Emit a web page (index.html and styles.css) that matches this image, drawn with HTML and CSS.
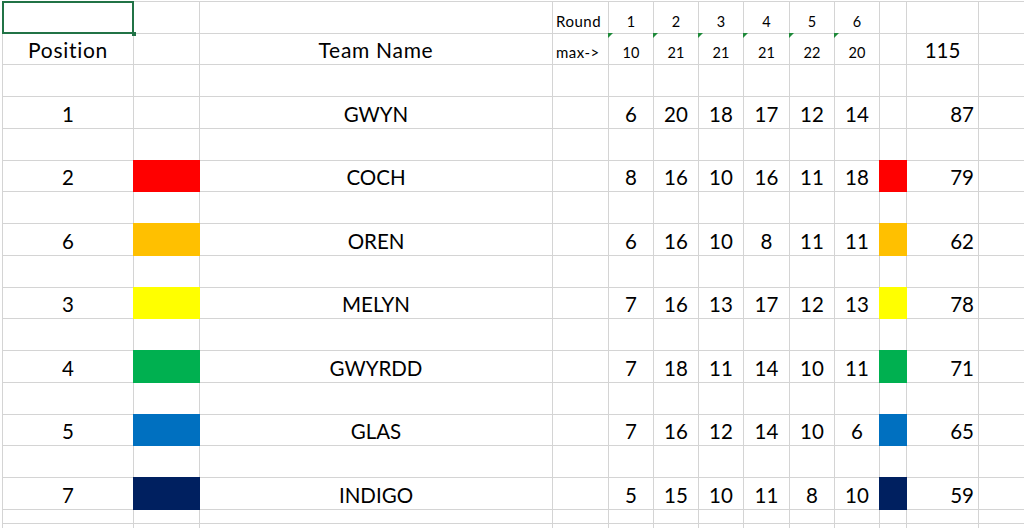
FILE: index.html
```html
<!DOCTYPE html>
<html>
<head>
<meta charset="utf-8">
<link rel="stylesheet" href="styles.css">
</head>
<body>
<div class="sheet">
  <div class="row">
    <div class="c sel"></div><div class="c"></div><div class="c"></div>
    <div class="c sm l txt">Round</div>
    <div class="c sm">1</div><div class="c sm">2</div><div class="c sm">3</div><div class="c sm">4</div><div class="c sm">5</div><div class="c sm">6</div>
    <div class="c"></div><div class="c"></div><div class="c"></div>
  </div>
  <div class="row">
    <div class="c lg hd">Position</div><div class="c"></div><div class="c lg hd">Team Name</div>
    <div class="c sm l txt">max-&gt;</div>
    <div class="c sm tri">10</div><div class="c sm tri">21</div><div class="c sm tri">21</div><div class="c sm tri">21</div><div class="c sm tri">22</div><div class="c sm tri">20</div>
    <div class="c"></div><div class="c lg">115</div><div class="c"></div>
  </div>
  <div class="row blank">
    <div class="c"></div><div class="c"></div><div class="c"></div><div class="c"></div><div class="c"></div><div class="c"></div><div class="c"></div><div class="c"></div><div class="c"></div><div class="c"></div><div class="c"></div><div class="c"></div><div class="c"></div>
  </div>
  <div class="row">
    <div class="c lg">1</div><div class="c"></div><div class="c lg">GWYN</div><div class="c"></div>
    <div class="c lg">6</div><div class="c lg">20</div><div class="c lg">18</div><div class="c lg">17</div><div class="c lg">12</div><div class="c lg">14</div>
    <div class="c"></div><div class="c lg r">87</div><div class="c"></div>
  </div>
  <div class="row blank">
    <div class="c"></div><div class="c"></div><div class="c"></div><div class="c"></div><div class="c"></div><div class="c"></div><div class="c"></div><div class="c"></div><div class="c"></div><div class="c"></div><div class="c"></div><div class="c"></div><div class="c"></div>
  </div>
  <div class="row">
    <div class="c lg">2</div><div class="c fill red"></div><div class="c lg">COCH</div><div class="c"></div>
    <div class="c lg">8</div><div class="c lg">16</div><div class="c lg">10</div><div class="c lg">16</div><div class="c lg">11</div><div class="c lg">18</div>
    <div class="c fill red"></div><div class="c lg r">79</div><div class="c"></div>
  </div>
  <div class="row blank">
    <div class="c"></div><div class="c"></div><div class="c"></div><div class="c"></div><div class="c"></div><div class="c"></div><div class="c"></div><div class="c"></div><div class="c"></div><div class="c"></div><div class="c"></div><div class="c"></div><div class="c"></div>
  </div>
  <div class="row">
    <div class="c lg">6</div><div class="c fill orange"></div><div class="c lg">OREN</div><div class="c"></div>
    <div class="c lg">6</div><div class="c lg">16</div><div class="c lg">10</div><div class="c lg">8</div><div class="c lg">11</div><div class="c lg">11</div>
    <div class="c fill orange"></div><div class="c lg r">62</div><div class="c"></div>
  </div>
  <div class="row blank">
    <div class="c"></div><div class="c"></div><div class="c"></div><div class="c"></div><div class="c"></div><div class="c"></div><div class="c"></div><div class="c"></div><div class="c"></div><div class="c"></div><div class="c"></div><div class="c"></div><div class="c"></div>
  </div>
  <div class="row">
    <div class="c lg">3</div><div class="c fill yellow"></div><div class="c lg">MELYN</div><div class="c"></div>
    <div class="c lg">7</div><div class="c lg">16</div><div class="c lg">13</div><div class="c lg">17</div><div class="c lg">12</div><div class="c lg">13</div>
    <div class="c fill yellow"></div><div class="c lg r">78</div><div class="c"></div>
  </div>
  <div class="row blank">
    <div class="c"></div><div class="c"></div><div class="c"></div><div class="c"></div><div class="c"></div><div class="c"></div><div class="c"></div><div class="c"></div><div class="c"></div><div class="c"></div><div class="c"></div><div class="c"></div><div class="c"></div>
  </div>
  <div class="row">
    <div class="c lg">4</div><div class="c fill green"></div><div class="c lg">GWYRDD</div><div class="c"></div>
    <div class="c lg">7</div><div class="c lg">18</div><div class="c lg">11</div><div class="c lg">14</div><div class="c lg">10</div><div class="c lg">11</div>
    <div class="c fill green"></div><div class="c lg r">71</div><div class="c"></div>
  </div>
  <div class="row blank">
    <div class="c"></div><div class="c"></div><div class="c"></div><div class="c"></div><div class="c"></div><div class="c"></div><div class="c"></div><div class="c"></div><div class="c"></div><div class="c"></div><div class="c"></div><div class="c"></div><div class="c"></div>
  </div>
  <div class="row">
    <div class="c lg">5</div><div class="c fill blue"></div><div class="c lg">GLAS</div><div class="c"></div>
    <div class="c lg">7</div><div class="c lg">16</div><div class="c lg">12</div><div class="c lg">14</div><div class="c lg">10</div><div class="c lg">6</div>
    <div class="c fill blue"></div><div class="c lg r">65</div><div class="c"></div>
  </div>
  <div class="row blank">
    <div class="c"></div><div class="c"></div><div class="c"></div><div class="c"></div><div class="c"></div><div class="c"></div><div class="c"></div><div class="c"></div><div class="c"></div><div class="c"></div><div class="c"></div><div class="c"></div><div class="c"></div>
  </div>
  <div class="row">
    <div class="c lg">7</div><div class="c fill navy"></div><div class="c lg">INDIGO</div><div class="c"></div>
    <div class="c lg">5</div><div class="c lg">15</div><div class="c lg">10</div><div class="c lg">11</div><div class="c lg">8</div><div class="c lg">10</div>
    <div class="c fill navy"></div><div class="c lg r">59</div><div class="c"></div>
  </div>
  <div class="row blank">
    <div class="c"></div><div class="c"></div><div class="c"></div><div class="c"></div><div class="c"></div><div class="c"></div><div class="c"></div><div class="c"></div><div class="c"></div><div class="c"></div><div class="c"></div><div class="c"></div><div class="c"></div>
  </div>
  <div class="row blank">
    <div class="c"></div><div class="c"></div><div class="c"></div><div class="c"></div><div class="c"></div><div class="c"></div><div class="c"></div><div class="c"></div><div class="c"></div><div class="c"></div><div class="c"></div><div class="c"></div><div class="c"></div>
  </div>
</div>
</body>
</html>
```

FILE: styles.css
```css
html, body {
  margin: 0;
  padding: 0;
  background: #ffffff;
  overflow: hidden;
}

body {
  width: 1024px;
  height: 528px;
  font-family: Lato, "Open Sans", sans-serif;
  color: #000000;
}

.sheet {
  display: grid;
  grid-template-columns: 130px 65px 352px 55px 44px 44px 44px 45px 44px 44px 26px 71px 60px;
  grid-template-rows: 31px 30px 31px 31px 31px 30px 31px 31px 31px 30px 31px 31px 31px 30px 31px 31px 13px 20px;
  gap: 1px;
  padding: 1px 0 0 1px;
  margin: 1px 0 0 2px;
  background: #d4d4d4;
  width: max-content;
}

.row {
  display: contents;
}

.c {
  background: #ffffff;
  display: flex;
  align-items: flex-end;
  justify-content: center;
  position: relative;
  line-height: 1;
  white-space: nowrap;
}

.lg {
  font-size: 20.5px;
  padding-bottom: 4px;
}

.hd {
  font-size: 21px;
  letter-spacing: 0.7px;
}

.sm {
  font-size: 14.5px;
  padding-bottom: 4px;
}

.txt {
  font-size: 15px;
  letter-spacing: 0.5px;
}

.l {
  justify-content: flex-start;
  padding-left: 3px;
}

.r {
  justify-content: flex-end;
  padding-right: 4px;
}

.sel {
  z-index: 1;
  box-shadow: 0 0 0 1px #217346, inset 0 0 0 1px #217346;
}

.sel::after {
  content: "";
  position: absolute;
  right: -3px;
  bottom: -3px;
  width: 4px;
  height: 4px;
  background: #217346;
}

.tri::before {
  content: "";
  position: absolute;
  left: -1px;
  top: -1px;
  width: 0;
  height: 0;
  border-style: solid;
  border-width: 5px 5px 0 0;
  border-color: #1f8a3a transparent transparent transparent;
}

.fill {
  margin: -1px;
}

.red { background: #ff0000; }
.orange { background: #ffc000; }
.yellow { background: #ffff00; }
.green { background: #00b050; }
.blue { background: #0070c0; }
.navy { background: #002060; }
```
